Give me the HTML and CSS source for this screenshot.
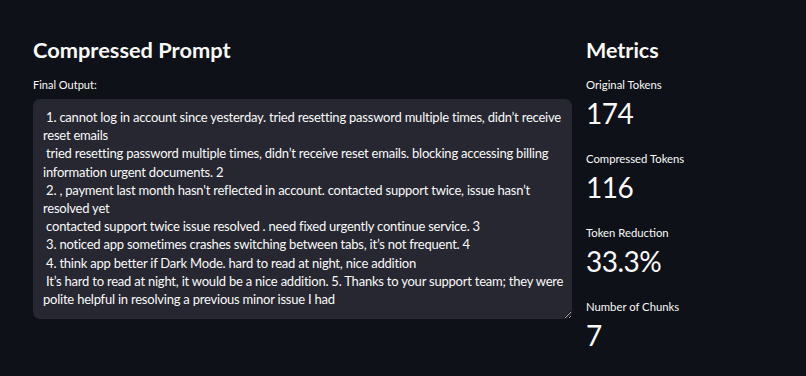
FILE: index.html
```html
<!DOCTYPE html>
<html lang="en">
<head>
    <meta charset="UTF-8">
    <meta name="viewport" content="width=device-width, initial-scale=1.0">
    <title>Prompt Compression</title>
    <link rel="stylesheet" href="styles.css">
</head>
<body>
    <div class="main">
        <div class="col-output">
            <h2>Compressed Prompt</h2>
            <label class="field-label" for="finalOutput">Final Output:</label>
            <div class="textarea-wrap">
                <textarea id="finalOutput" readonly> 1. cannot log in account since yesterday. tried resetting password multiple times, didn’t receive reset emails
 tried resetting password multiple times, didn’t receive reset emails. blocking accessing billing information urgent documents. 2
 2. , payment last month hasn't reflected in account. contacted support twice, issue hasn’t resolved yet
 contacted support twice issue resolved . need fixed urgently continue service. 3
 3. noticed app sometimes crashes switching between tabs, it’s not frequent. 4
 4. think app better if Dark Mode. hard to read at night, nice addition
 It’s hard to read at night, it would be a nice addition. 5. Thanks to your support team; they were polite helpful in resolving a previous minor issue I had</textarea>
            </div>
        </div>

        <div class="col-metrics">
            <h2>Metrics</h2>
            <div class="metric">
                <div class="metric-label">Original Tokens</div>
                <div class="metric-value">174</div>
            </div>
            <div class="metric">
                <div class="metric-label">Compressed Tokens</div>
                <div class="metric-value">116</div>
            </div>
            <div class="metric">
                <div class="metric-label">Token Reduction</div>
                <div class="metric-value">33.3%</div>
            </div>
            <div class="metric">
                <div class="metric-label">Number of Chunks</div>
                <div class="metric-value">7</div>
            </div>
        </div>
    </div>
</body>
</html>
```

FILE: styles.css
```css
body {
    font-family: 'Lato', 'Open Sans', sans-serif;
    margin: 0;
    background-color: #0e1117;
    color: #fafafa;
}

.main {
    display: flex;
    gap: 14px;
    padding: 36px 0 0 33px;
}

h2 {
    font-size: 21.8px;
    font-weight: 700;
    line-height: 28px;
    margin: 0 0 13px 0;
}

.col-output {
    width: 539px;
}

.col-metrics {
    flex: 1;
}

.col-metrics h2 {
    font-size: 21.5px;
}

.field-label {
    display: block;
    font-size: 11px;
    line-height: 16px;
    margin-bottom: 6px;
}

.textarea-wrap {
    background-color: #262730;
    border-radius: 7px;
}

textarea {
    display: block;
    box-sizing: border-box;
    width: 100%;
    height: 220px;
    padding: 9px 4px 9px 10px;
    border: none;
    background: transparent;
    color: #fafafa;
    font-family: inherit;
    font-size: 13px;
    letter-spacing: -0.22px;
    line-height: 18.2px;
    resize: vertical;
    outline: none;
    overflow: hidden;
}

.metric {
    height: 74px;
}

.metric-label {
    font-size: 11.3px;
    line-height: 16px;
}

.metric-value {
    font-size: 28px;
    letter-spacing: -0.5px;
    line-height: 36px;
    margin-top: 2px;
}
```
